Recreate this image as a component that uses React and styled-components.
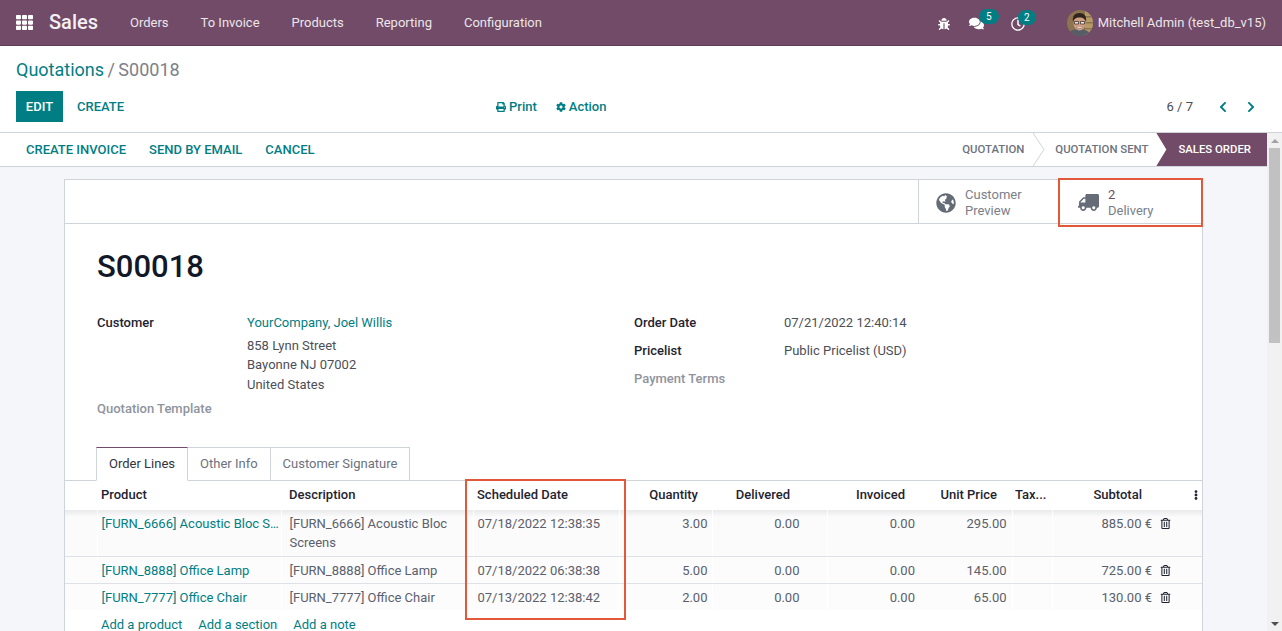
import React from 'react';
import styled, { createGlobalStyle } from 'styled-components';
import {
  FaTh, FaBug, FaComments, FaRegClock, FaPrint, FaCog, FaChevronLeft, FaChevronRight,
  FaGlobeAmericas, FaTruck, FaRegTrashAlt, FaEllipsisV,
} from 'react-icons/fa';

const TEAL = '#017e84';
const PLUM = '#714b67';

const menus = ['Orders', 'To Invoice', 'Products', 'Reporting', 'Configuration'];

const lines = [
  { product: '[FURN_6666] Acoustic Bloc Screens', desc: '[FURN_6666] Acoustic Bloc Screens', date: '07/18/2022 12:38:35', qty: '3.00', price: '295.00', total: '885.00 €' },
  { product: '[FURN_8888] Office Lamp', desc: '[FURN_8888] Office Lamp', date: '07/18/2022 06:38:38', qty: '5.00', price: '145.00', total: '725.00 €' },
  { product: '[FURN_7777] Office Chair', desc: '[FURN_7777] Office Chair', date: '07/13/2022 12:38:42', qty: '2.00', price: '65.00', total: '130.00 €' },
];

const Avatar = () => (
  <AvatarSvg viewBox="0 0 26 26">
    <defs>
      <clipPath id="avatar-clip"><circle cx="13" cy="13" r="13" /></clipPath>
    </defs>
    <g clipPath="url(#avatar-clip)">
      <rect width="26" height="26" fill="#8d7350" />
      <rect x="18" width="8" height="26" fill="#b59a68" />
      <rect y="6" x="18" width="8" height="1.5" fill="#8d7350" />
      <rect y="12" x="18" width="8" height="1.5" fill="#8d7350" />
      <rect y="18" x="18" width="8" height="1.5" fill="#8d7350" />
      <path d="M1 26c0-5 5-7 11-7s11 2 11 7z" fill="#565d66" />
      <ellipse cx="12.5" cy="13" rx="6" ry="7.5" fill="#cf9f86" />
      <path d="M6 12c-1-6 2-9 6.500-9s7.500 3 6.500 9c-1-3-2.500-4.500-6.500-4.500S7 9 6 12z" fill="#2f241e" />
      <path d="M7.500 11.500h4v2.500h-4zM13.500 11.500h4v2.500h-4z" fill="#f1e4dc" stroke="#2c2320" strokeWidth=".7" />
      <path d="M9 17c2 1.600 5 1.600 7 0" fill="#fff" stroke="#7d4a3a" strokeWidth=".6" />
    </g>
  </AvatarSvg>
);

const App = () => (
  <>
    <Global />
    <Page>
      <NavBar>
        <AppsIcon><FaTh /></AppsIcon>
        <Brand>Sales</Brand>
        <Menu>
          {menus.map((m) => <MenuItem key={m}>{m}</MenuItem>)}
        </Menu>
        <Systray>
          <TrayIcon $w={31}><FaBug size={12} /></TrayIcon>
          <TrayIcon $w={42}><FaComments size={15} /><Badge $left={18} $w={20}>5</Badge></TrayIcon>
          <TrayIcon $w={64}><FaRegClock size={14} /><Badge $left={15} $w={18}>2</Badge></TrayIcon>
          <User><Avatar />Mitchell Admin (test_db_v15)</User>
        </Systray>
      </NavBar>

      <ControlPanel>
        <Breadcrumb><a>Quotations</a><span> / S00018</span></Breadcrumb>
        <Toolbar>
          <LeftButtons>
            <PrimaryButton>EDIT</PrimaryButton>
            <LinkButton>CREATE</LinkButton>
          </LeftButtons>
          <CenterActions>
            <ActionLink><FaPrint size={10} />Print</ActionLink>
            <ActionLink><FaCog size={10} />Action</ActionLink>
          </CenterActions>
          <Pager>
            <PagerText>6 / 7</PagerText>
            <PagerArrow><FaChevronLeft size={12} /></PagerArrow>
            <PagerArrow><FaChevronRight size={12} /></PagerArrow>
          </Pager>
        </Toolbar>
      </ControlPanel>

      <Body>
        <Content>
          <StatusBar>
            <StatusActions>
              <StatusAction>CREATE INVOICE</StatusAction>
              <StatusAction>SEND BY EMAIL</StatusAction>
              <StatusAction>CANCEL</StatusAction>
            </StatusActions>
            <Stages>
              <Stage>QUOTATION</Stage>
              <StageChevron viewBox="0 0 12 33"><path d="M0 0l11 16.500L0 33" fill="none" stroke="#ced4da" /></StageChevron>
              <Stage>QUOTATION SENT</Stage>
              <ActiveStage>SALES ORDER</ActiveStage>
            </Stages>
          </StatusBar>

          <SheetArea>
            <Sheet>
              <ButtonBox>
                <StatButton $w={141} $pad={17}>
                  <FaGlobeAmericas size={20} />
                  <StatText>Customer<br />Preview</StatText>
                </StatButton>
                <StatButton $w={143} $pad={18}>
                  <TruckIcon size={21} />
                  <StatText><StatValue>2</StatValue><br />Delivery</StatText>
                  <Highlight $top={-2} $left={-2} $right={-1} $bottom={-4} />
                </StatButton>
              </ButtonBox>

              <Title>S00018</Title>

              <Groups>
                <FieldGroup>
                  <Label>Customer</Label>
                  <Value>
                    <CustomerLink>YourCompany, Joel Willis</CustomerLink>
                    <Address>858 Lynn Street<br />Bayonne NJ 07002<br />United States</Address>
                  </Value>
                  <MutedLabel>Quotation Template</MutedLabel>
                  <Value />
                </FieldGroup>
                <RightGroup>
                  <Label>Order Date</Label>
                  <Value>07/21/2022 12:40:14</Value>
                  <Label>Pricelist</Label>
                  <Value>Public Pricelist (USD)</Value>
                  <MutedLabel>Payment Terms</MutedLabel>
                  <Value />
                </RightGroup>
              </Groups>

              <Tabs>
                <Tab $active>Order Lines</Tab>
                <Tab>Other Info</Tab>
                <Tab>Customer Signature</Tab>
              </Tabs>

              <TableWrap>
                <LinesTable>
                  <colgroup>
                    {[32, 184, 192, 146, 93, 115, 92, 93, 40, 104, 24, 22].map((w, i) => <col key={i} width={w} />)}
                  </colgroup>
                  <thead>
                    <tr>
                      <th />
                      <NarrowTh>Product</NarrowTh>
                      <th>Description</th>
                      <NarrowTh>Scheduled Date</NarrowTh>
                      <NumTh $pr={14}>Quantity</NumTh>
                      <NumTh $pr={37}>Delivered</NumTh>
                      <NumTh $pr={14}>Invoiced</NumTh>
                      <NumTh $pr={15}>Unit Price</NumTh>
                      <TaxTh>Tax...</TaxTh>
                      <NumTh $pr={14}>Subtotal</NumTh>
                      <th />
                      <DotsTh><FaEllipsisV size={10} /></DotsTh>
                    </tr>
                  </thead>
                  <tbody>
                    {lines.map((l) => (
                      <tr key={l.date}>
                        <td />
                        <ProductCell><span>{l.product}</span></ProductCell>
                        <TextCell>{l.desc}</TextCell>
                        <DateCell>{l.date}</DateCell>
                        <NumTd $pr={4} $line>{l.qty}</NumTd>
                        <NumTd $pr={27} $line>0.00</NumTd>
                        <NumTd $pr={4} $line>0.00</NumTd>
                        <NumTd $pr={5}>{l.price}</NumTd>
                        <TextCell />
                        <NumTd $pr={4} $line>{l.total}</NumTd>
                        <TrashCell><FaRegTrashAlt size={11} /></TrashCell>
                        <td />
                      </tr>
                    ))}
                  </tbody>
                </LinesTable>
                <AddRow>
                  <a>Add a product</a>
                  <a>Add a section</a>
                  <a>Add a note</a>
                </AddRow>
                <Highlight $top={-2} $left={400} $width={161} $height={141} />
              </TableWrap>
            </Sheet>
          </SheetArea>
        </Content>

        <ScrollBar>
          <ScrollArrow $up />
          <ScrollTrack><ScrollThumb /></ScrollTrack>
          <ScrollArrow />
        </ScrollBar>
      </Body>
    </Page>
  </>
);

export default App;

const Global = createGlobalStyle`
  html, body {
    margin: 0;
    height: 100%;
    overflow: hidden;
  }

  body {
    font-family: Roboto, "Liberation Sans", sans-serif;
    font-size: 13px;
    line-height: 19.5px;
    color: #4c4c4c;
  }

  * {
    box-sizing: border-box;
  }
`;

const Page = styled.div`
  height: 100vh;
  display: flex;
  flex-direction: column;
  overflow: hidden;
`;

const NavBar = styled.header`
  flex: 0 0 46px;
  display: flex;
  align-items: center;
  background: ${PLUM};
  border-bottom: 1px solid #5f3f57;
  color: #fff;
  padding-left: 16px;
`;

const AppsIcon = styled.div`
  display: flex;
  width: 18px;
  font-size: 17px;
  margin-right: 15px;
`;

const Brand = styled.div`
  font-size: 20px;
  font-weight: 500;
  color: #f4eff3;
  margin-right: 32px;
  width: 49px;
`;

const Menu = styled.nav`
  display: flex;
  gap: 32px;
`;

const MenuItem = styled.div`
  color: #ece6ea;
`;

const Systray = styled.div`
  margin-left: auto;
  display: flex;
  align-items: center;
  padding-right: 16px;
`;

const TrayIcon = styled.div`
  position: relative;
  width: ${(p) => p.$w}px;
  display: flex;
  align-items: center;
  padding-left: 8px;
  padding-top: 2px;
`;

const Badge = styled.span`
  position: absolute;
  left: ${(p) => p.$left}px;
  top: -5px;
  height: 15px;
  width: ${(p) => p.$w}px;
  border-radius: 8px;
  background: ${TEAL};
  color: #fff;
  font-size: 10px;
  line-height: 15px;
  text-align: center;
`;

const User = styled.div`
  display: flex;
  align-items: center;
  gap: 5px;
  color: #ece6ea;
`;

const AvatarSvg = styled.svg`
  width: 26px;
  height: 26px;
`;

const ControlPanel = styled.div`
  flex: 0 0 87px;
  padding: 10px 16px 0;
  background: #fff;
  border-bottom: 1px solid #ced4da;
`;

const Breadcrumb = styled.div`
  font-size: 18px;
  line-height: 27px;
  color: #7b8089;

  a {
    color: ${TEAL};
  }

  span {
    word-spacing: -1px;
  }
`;

const Toolbar = styled.div`
  margin-top: 8px;
  display: grid;
  grid-template-columns: 480px 1fr auto;
  align-items: center;
`;

const LeftButtons = styled.div`
  display: flex;
  align-items: center;
`;

const PrimaryButton = styled.div`
  width: 47px;
  height: 31px;
  background: ${TEAL};
  color: #fff;
  font-weight: 500;
  line-height: 31px;
  text-align: center;
`;

const LinkButton = styled.div`
  color: ${TEAL};
  font-weight: 500;
  padding: 0 14px;
  white-space: nowrap;
`;

const StatusAction = styled(LinkButton)`
  padding: 0;
`;

const CenterActions = styled.div`
  display: flex;
  gap: 19px;
`;

const ActionLink = styled.div`
  display: flex;
  align-items: center;
  gap: 3px;
  color: ${TEAL};
  font-weight: 500;
`;

const Pager = styled.div`
  display: flex;
  align-items: center;
  gap: 12px;
  padding-right: 7px;
`;

const PagerText = styled.div`
  color: #4c4c4c;
  margin-right: 10px;
`;

const PagerArrow = styled.div`
  display: flex;
  color: ${TEAL};
  width: 16px;
  justify-content: center;
`;

const Body = styled.div`
  flex: 1;
  min-height: 0;
  display: flex;
`;

const Content = styled.main`
  flex: 1;
  min-width: 0;
  display: flex;
  flex-direction: column;
  background: #f5f6fa;
`;

const StatusBar = styled.div`
  flex: 0 0 34px;
  display: flex;
  justify-content: space-between;
  align-items: stretch;
  background: #fff;
  border-bottom: 1px solid #ced4da;
`;

const StatusActions = styled.div`
  display: flex;
  align-items: center;
  padding-left: 26px;
  gap: 23px;
`;

const Stages = styled.div`
  display: flex;
  align-items: stretch;
`;

const Stage = styled.div`
  color: #6c7280;
  font-size: 11.375px;
  font-weight: 500;
  line-height: 33px;
  padding: 0 9px 0 10px;
  white-space: nowrap;
`;

const StageChevron = styled.svg`
  width: 12px;
  height: 33px;
`;

const ActiveStage = styled.div`
  background: ${PLUM};
  color: #fff;
  font-size: 11.375px;
  font-weight: 500;
  line-height: 33px;
  margin-left: -1px;
  padding: 0 16px 0 22px;
  white-space: nowrap;
  clip-path: polygon(0 0, 100% 0, 100% 100%, 0 100%, 10px 50%);
`;

const SheetArea = styled.div`
  flex: 1;
  min-height: 0;
  padding: 12px 0 0 64px;
`;

const Sheet = styled.section`
  background: #fff;
  border: 1px solid #ced4da;
  border-bottom: 0;
  height: 100%;
  width: 1139px;
`;

const ButtonBox = styled.div`
  height: 44px;
  border-bottom: 1px solid #ced4da;
  display: flex;
  justify-content: flex-end;
`;

const StatButton = styled.div`
  position: relative;
  width: ${(p) => p.$w}px;
  height: 43px;
  border-left: 1px solid #ced4da;
  display: flex;
  align-items: center;
  padding: 2px 0 0 ${(p) => p.$pad}px;
  gap: 9px;
  color: #666b78;
  line-height: 16px;
`;

const TruckIcon = styled(FaTruck)`
  transform: scaleX(-1);
`;

const StatText = styled.div`
  color: #7b8089;
`;

const StatValue = styled.span`
  color: ${PLUM};
`;

const Highlight = styled.div`
  position: absolute;
  top: ${(p) => p.$top}px;
  left: ${(p) => p.$left}px;
  right: ${(p) => (p.$right === undefined ? 'auto' : `${p.$right}px`)};
  bottom: ${(p) => (p.$bottom === undefined ? 'auto' : `${p.$bottom}px`)};
  width: ${(p) => (p.$width ? `${p.$width}px` : 'auto')};
  height: ${(p) => (p.$height ? `${p.$height}px` : 'auto')};
  border: 2px solid #e2583a;
  pointer-events: none;
`;

const Title = styled.h1`
  margin: 22px 0 0 32px;
  font-size: 31px;
  font-weight: 500;
  line-height: 42px;
  color: #111827;
`;

const Groups = styled.div`
  display: grid;
  grid-template-columns: 537px 1fr;
  padding-left: 32px;
  margin-top: 25px;
`;

const FieldGroup = styled.div`
  display: grid;
  grid-template-columns: 150px 1fr;
  grid-auto-rows: min-content;
  row-gap: 5px;
`;

const RightGroup = styled(FieldGroup)`
  row-gap: 8.5px;
`;

const Label = styled.div`
  font-weight: 500;
  color: #1f2430;
`;

const MutedLabel = styled(Label)`
  color: #8f949e;
`;

const Value = styled.div`
  color: #4c4f58;
`;

const CustomerLink = styled.div`
  color: ${TEAL};
  margin-bottom: 3px;
`;

const Address = styled.div``;

const Tabs = styled.div`
  display: flex;
  padding-left: 31px;
  margin-top: 28px;
  height: 34px;
  position: relative;
`;

const Tab = styled.div`
  padding: 6px 12px;
  height: 34px;
  border: 1px solid #ced4da;
  border-left-width: ${(p) => (p.$active ? 1 : 0)}px;
  border-top-color: ${(p) => (p.$active ? PLUM : '#ced4da')};
  border-bottom-color: ${(p) => (p.$active ? '#fff' : '#ced4da')};
  color: ${(p) => (p.$active ? '#2f3440' : '#6c7280')};
  background: #fff;
  position: relative;
  z-index: 1;
`;

const TableWrap = styled.div`
  position: relative;
  border-top: 1px solid #ced4da;
  margin-top: -1px;
`;

const LinesTable = styled.table`
  width: 1137px;
  table-layout: fixed;
  border-collapse: collapse;

  th {
    height: 29px;
    padding: 0 8px 1px;
    text-align: left;
    font-weight: 500;
    color: #1f2430;
    white-space: nowrap;
  }

  td {
    padding: 4px 8px 3px;
    vertical-align: top;
    line-height: 19px;
    color: #5b606c;
    background: #fcfcfc;
    border-bottom: 1px solid #dee2e6;
  }

  tbody tr:first-child td {
    padding-bottom: 4px;
    background: linear-gradient(#e8e9eb, #fbfbfb 7px);
  }

  tbody tr:last-child td {
    border-bottom: 0;
  }
`;

const NarrowTh = styled.th`
  && {
    padding-left: 4px;
  }
`;

const NumTh = styled.th`
  && {
    text-align: right;
    padding-right: ${(p) => p.$pr}px;
  }
`;

const TaxTh = styled.th`
  && {
    padding-left: 3px;
    padding-right: 0;
  }
`;

const DotsTh = styled.th`
  && {
    padding: 2px 0 0 11px;
    vertical-align: middle;
  }
`;

const TextCell = styled.td`
  && {
    border-left: 1px solid #fff;
  }
`;

const DateCell = styled(TextCell)`
  && {
    padding-left: 4px;
  }
`;

const NumTd = styled.td`
  && {
    text-align: right;
    padding-right: ${(p) => p.$pr}px;
    ${(p) => (p.$line ? 'border-left: 1px solid #fff;' : '')}
  }
`;

const ProductCell = styled(TextCell)`
  && {
    color: ${TEAL};
    padding-left: 4px;
    padding-right: 0;
  }

  span {
    display: block;
    overflow: hidden;
    white-space: nowrap;
    text-overflow: ellipsis;
  }
`;

const TrashCell = styled.td`
  && {
    padding: 5px 0 0 4px;
    color: #1f2430;
  }
`;

const AddRow = styled.div`
  display: flex;
  gap: 16px;
  padding: 5px 0 0 36px;
  color: ${TEAL};
`;

const ScrollBar = styled.aside`
  flex: 0 0 15px;
  display: flex;
  flex-direction: column;
  background: #f1f1f1;
`;

const ScrollArrow = styled.div`
  flex: 0 0 15px;
  display: flex;
  align-items: center;
  justify-content: center;

  &::before {
    content: '';
    border-left: 4px solid transparent;
    border-right: 4px solid transparent;
    ${(p) => (p.$up ? 'border-bottom: 4px solid #a3a3a3;' : 'border-top: 4px solid #505050;')}
  }
`;

const ScrollTrack = styled.div`
  flex: 1;
  padding: 0 2px;
`;

const ScrollThumb = styled.div`
  height: 195px;
  background: #c1c1c1;
`;
